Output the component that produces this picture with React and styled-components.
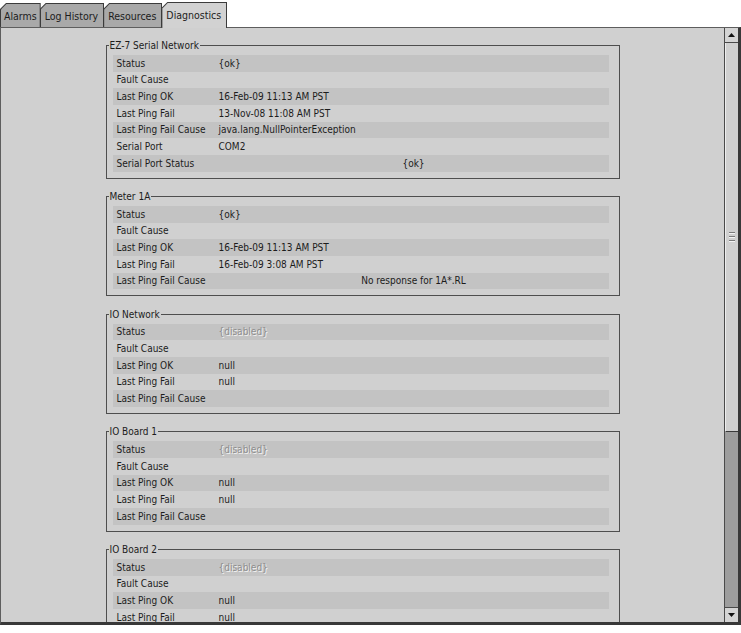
import styled, { createGlobalStyle, css } from 'styled-components';

const GlobalStyle = createGlobalStyle`
  html, body {
    margin: 0;
    padding: 0;
    background: #ffffff;
  }
  body {
    font-family: "DejaVu Sans Condensed", "Liberation Sans", sans-serif;
    font-size: 10px;
    color: #1c1c1c;
  }
`;

const TABS = ['Alarms', 'Log History', 'Resources', 'Diagnostics'];

const DISABLED_ROWS = [
  { label: 'Status', value: '{disabled}', disabled: true },
  { label: 'Fault Cause', value: '' },
  { label: 'Last Ping OK', value: 'null' },
  { label: 'Last Ping Fail', value: 'null' },
  { label: 'Last Ping Fail Cause', value: '' },
];

const GROUPS = [
  {
    title: 'EZ-7 Serial Network',
    rows: [
      { label: 'Status', value: '{ok}' },
      { label: 'Fault Cause', value: '' },
      { label: 'Last Ping OK', value: '16-Feb-09 11:13 AM PST' },
      { label: 'Last Ping Fail', value: '13-Nov-08 11:08 AM PST' },
      { label: 'Last Ping Fail Cause', value: 'java.lang.NullPointerException' },
      { label: 'Serial Port', value: 'COM2' },
      { label: 'Serial Port Status', value: '{ok}', center: true },
    ],
  },
  {
    title: 'Meter 1A',
    rows: [
      { label: 'Status', value: '{ok}' },
      { label: 'Fault Cause', value: '' },
      { label: 'Last Ping OK', value: '16-Feb-09 11:13 AM PST' },
      { label: 'Last Ping Fail', value: '16-Feb-09 3:08 AM PST' },
      { label: 'Last Ping Fail Cause', value: 'No response for 1A*.RL', center: true },
    ],
  },
  { title: 'IO Network', rows: DISABLED_ROWS },
  { title: 'IO Board 1', rows: DISABLED_ROWS },
  { title: 'IO Board 2', rows: DISABLED_ROWS },
];

export default function App() {
  return (
    <>
      <GlobalStyle />
      <TabBar>
        {TABS.map((t, i) => (
          <TabOuter key={t} $active={t === 'Diagnostics'}>
            <TabInner $active={t === 'Diagnostics'} $first={i === 0}>
              {t}
            </TabInner>
          </TabOuter>
        ))}
      </TabBar>
      <Panel>
        <Content>
          {GROUPS.map((g) => (
            <Group key={g.title}>
              <Legend>{g.title}</Legend>
              {g.rows.map((r, i) => (
                <Row key={r.label} $striped={i % 2 === 0}>
                  <Label>{r.label}</Label>
                  <Value $center={r.center} $disabled={r.disabled}>
                    {r.value}
                  </Value>
                </Row>
              ))}
            </Group>
          ))}
        </Content>
        <ScrollBar>
          <ArrowButton>
            <svg width="7" height="4" viewBox="0 0 7 4">
              <polygon points="3.5,0 7,4 0,4" fill="#111" />
            </svg>
          </ArrowButton>
          <Thumb>
            <Grip>
              <span />
              <span />
              <span />
            </Grip>
          </Thumb>
          <Track />
          <ArrowButton $bottom>
            <svg width="7" height="4" viewBox="0 0 7 4">
              <polygon points="0,0 7,0 3.5,4" fill="#111" />
            </svg>
          </ArrowButton>
        </ScrollBar>
      </Panel>
    </>
  );
}

const TabBar = styled.div`
  display: flex;
  align-items: flex-end;
  height: 25px;
  padding-top: 3px;
  margin-bottom: -1px;
  position: relative;
  z-index: 1;
`;

const TabOuter = styled.div`
  background: #3c3c3c;
  padding: 1px 1px 0 1px;
  margin-right: -1px;
  height: ${(p) => (p.$active ? '25px' : '23px')};
  clip-path: polygon(6px 0, 100% 0, 100% 100%, 0 100%, 0 6px);
  ${(p) =>
    !p.$active &&
    css`
      margin-bottom: 1px;
    `}
`;

const TabInner = styled.div`
  height: 100%;
  display: flex;
  align-items: center;
  padding: ${(p) => (p.$first ? '0 3px' : '0 5px 0 4px')};
  box-sizing: border-box;
  font-size: 10.5px;
  background: ${(p) => (p.$active ? '#d2d2d2' : '#a9a9a9')};
  clip-path: polygon(5.4px 0, 100% 0, 100% 100%, 0 100%, 0 5.4px);
  padding-bottom: ${(p) => (p.$active ? '2px' : '0')};
`;

const Panel = styled.div`
  display: flex;
  height: 594px;
  background: #d0d0d0;
  border-top: 1px solid #5e5e5e;
  border-left: 1px solid #5e5e5e;
  border-right: 3px solid #383838;
  border-bottom: 3px solid #383838;
`;

const Content = styled.div`
  flex: 1;
  overflow: hidden;
  display: flex;
  flex-direction: column;
  align-items: center;
  gap: 11.4px;
  padding-top: 11px;
`;

const Group = styled.fieldset`
  width: 514px;
  box-sizing: border-box;
  flex-shrink: 0;
  margin: 0;
  padding: 3px 10px 6px 6px;
  border: 1px solid #4e4e4e;
`;

const Legend = styled.legend`
  padding: 0 1px;
  margin-left: -4px;
  line-height: 13px;
`;

const Row = styled.div`
  display: grid;
  grid-template-columns: 106px 1fr;
  align-items: center;
  height: 16.67px;
  background: ${(p) => (p.$striped ? '#c3c3c3' : 'transparent')};
`;

const Label = styled.div`
  padding-left: 4px;
  white-space: nowrap;
`;

const Value = styled.div`
  white-space: nowrap;
  text-align: ${(p) => (p.$center ? 'center' : 'left')};
  ${(p) =>
    p.$disabled &&
    css`
      color: #8e8e8e;
      text-shadow: 1px 1px 0 #f2f2f2;
    `}
`;

const ScrollBar = styled.div`
  width: 13px;
  display: flex;
  flex-direction: column;
  border-left: 1px solid #4a4a4a;
  background: #9d9d9d;
`;

const ArrowButton = styled.div`
  height: 14px;
  flex-shrink: 0;
  display: flex;
  align-items: center;
  justify-content: center;
  background: #d4d4d4;
  border-${(p) => (p.$bottom ? 'top' : 'bottom')}: 1px solid #4a4a4a;
`;

const Thumb = styled.div`
  height: 388px;
  flex-shrink: 0;
  background: #d0d0d0;
  border-bottom: 1px solid #3a3a3a;
  border-left: 1px solid #eeeeee;
  display: flex;
  align-items: center;
  justify-content: center;
`;

const Grip = styled.div`
  display: flex;
  flex-direction: column;
  gap: 2px;

  span {
    display: block;
    width: 6px;
    height: 1px;
    background: #7a7a7a;
    border-bottom: 1px solid #f4f4f4;
  }
`;

const Track = styled.div`
  flex: 1;
`;
